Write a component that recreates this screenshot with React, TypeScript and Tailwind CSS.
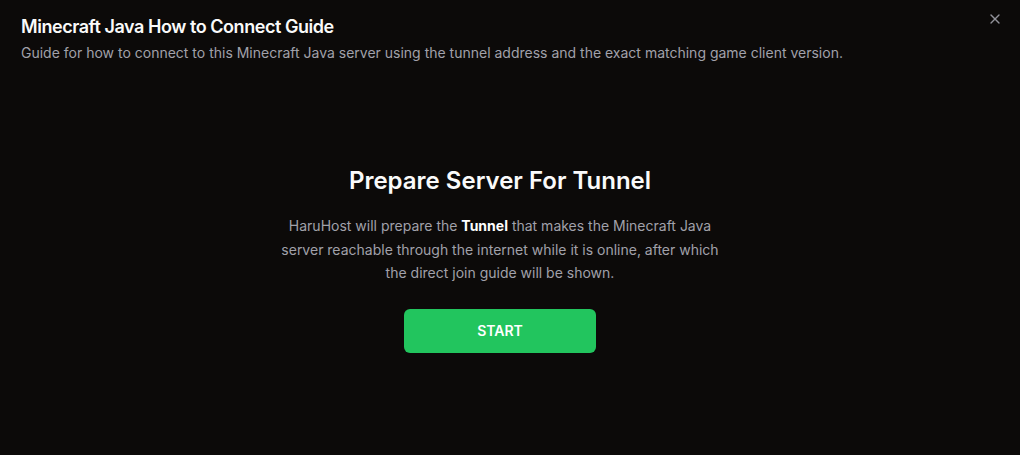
import { X } from "lucide-react";

export default function App() {
    return (
        <div
            className="relative flex h-[455px] w-full flex-col bg-[#0c0a09] text-[#fafafa]"
            style={{ fontFamily: "Inter, 'Noto Sans', sans-serif" }}
        >
            {/* Header */}
            <div className="pl-[21px] pr-12 pt-[13px]">
                <h2 className="text-lg font-semibold leading-7 tracking-tight">Minecraft Java How to Connect Guide</h2>
                <p className="mt-[2px] text-sm leading-5 text-[#a1a1aa]">
                    Guide for how to connect to this Minecraft Java server using the tunnel address and the exact matching game client version.
                </p>
            </div>

            <button className="absolute right-[17px] top-[11px] text-[#a1a1aa] opacity-90 hover:opacity-100">
                <X size={16} />
            </button>

            {/* Body */}
            <div className="mr-5 flex flex-1 flex-col items-center justify-center text-center">
                <h3 className="text-2xl font-semibold leading-8">Prepare Server For Tunnel</h3>
                <p className="mt-[17px] max-w-md text-sm leading-[1.7] text-[#a1a1aa]">
                    HaruHost will prepare the <span className="font-bold text-white">Tunnel</span> that makes the Minecraft Java server reachable through the internet while it is online, after which the direct join guide will be shown.
                </p>
                <button className="mt-6 h-11 w-48 rounded-md bg-[#22c55e] text-sm font-semibold text-white">START</button>
            </div>
        </div>
    );
}
